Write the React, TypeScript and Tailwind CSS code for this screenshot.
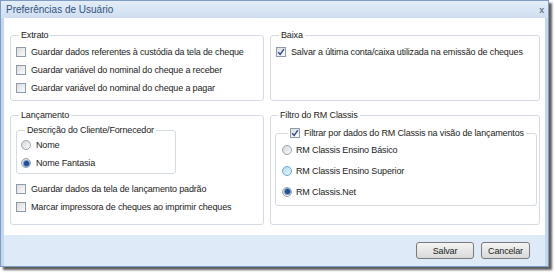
import React from "react";

const font = { fontFamily: '"Liberation Sans", Arial, sans-serif' };

function CheckBox({ checked = false }: { checked?: boolean }) {
  return (
    <span className="flex h-[10px] w-[10px] shrink-0 items-center justify-center border border-[#8f9bab] bg-gradient-to-br from-[#dcdcdc] to-[#fbfbfb]">
      {checked && (
        <svg width="8" height="8" viewBox="0 0 8 8">
          <path d="M1.2 4.2 L3.2 6.4 L6.9 1.2" fill="none" stroke="#2d4c8e" strokeWidth="1.4" />
        </svg>
      )}
    </span>
  );
}

function Radio({ selected = false, hover = false }: { selected?: boolean; hover?: boolean }) {
  return (
    <span
      className={
        "flex h-[10px] w-[10px] shrink-0 items-center justify-center rounded-full border " +
        (hover
          ? "border-[#6aa6d6] bg-gradient-to-br from-[#b5daf3] to-[#e6f4fc]"
          : "border-[#9aa3ae] bg-gradient-to-br from-[#d7d7d7] to-[#fafafa]")
      }
    >
      {selected && <span className="h-[5px] w-[5px] rounded-full bg-[#234f8a] ring-1 ring-[#6f9bd0]" />}
    </span>
  );
}

function CheckRow({ label, checked }: { label: string; checked?: boolean }) {
  return (
    <div className="flex h-[18px] items-center gap-[5px]">
      <CheckBox checked={checked} />
      <span>{label}</span>
    </div>
  );
}

export default function App() {
  return (
    <div className="h-[273px] w-[555px] bg-white text-[9px] leading-[12px] tracking-[-0.15px] text-[#1b1b1b]" style={font}>
      <div className="flex h-[267px] w-[549px] flex-col border border-[#7f9dc4] bg-white shadow-[3px_3px_2px_rgba(40,40,40,0.75)]">
        <div className="flex h-[18px] items-center justify-between bg-gradient-to-b from-[#e4edf8] to-[#cfdef1] pl-[5px] pr-[4px]">
          <span className="text-[10px] tracking-normal text-[#33537f]">Preferências de Usuário</span>
          <span className="text-[9px] font-bold text-[#6b7c90]">x</span>
        </div>
        <div className="flex flex-1 flex-col border-l-[3px] border-r-[3px] border-[#c5d7ee]">
          <div className="grid flex-1 grid-cols-[254px_270px] grid-rows-[72px_116px] gap-x-[6px] gap-y-[8px] bg-white pl-[6px] pt-[11px]">
            <fieldset className="rounded-[3px] border border-[#d4dbe3] pl-[5px]">
              <legend className="ml-[3px] px-[2px]">Extrato</legend>
              <div className="mt-[2px] flex flex-col">
                <CheckRow label="Guardar dados referentes à custódia da tela de cheque" />
                <CheckRow label="Guardar variável do nominal do cheque a receber" />
                <CheckRow label="Guardar variável do nominal do cheque a pagar" />
              </div>
            </fieldset>

            <fieldset className="rounded-[3px] border border-[#d4dbe3] pl-[5px]">
              <legend className="ml-[3px] px-[2px]">Baixa</legend>
              <div className="mt-[2px] flex flex-col">
                <CheckRow checked label="Salvar a última conta/caixa utilizada na emissão de cheques" />
              </div>
            </fieldset>

            <fieldset className="rounded-[3px] border border-[#d4dbe3] pl-[5px]">
              <legend className="ml-[3px] px-[2px]">Lançamento</legend>
              <fieldset className="mt-[3px] w-[160px] rounded-[3px] border border-[#d4dbe3] pb-[1px] pl-[4px]">
                <legend className="ml-[4px] px-[2px]">Descrição do Cliente/Fornecedor</legend>
                <div className="flex h-[18px] items-center gap-[5px]">
                  <Radio />
                  <span>Nome</span>
                </div>
                <div className="flex h-[18px] items-center gap-[5px]">
                  <Radio selected />
                  <span>Nome Fantasia</span>
                </div>
              </fieldset>
              <div className="mt-[6px] flex flex-col">
                <CheckRow label="Guardar dados da tela de lançamento padrão" />
                <CheckRow label="Marcar impressora de cheques ao imprimir cheques" />
              </div>
            </fieldset>

            <fieldset className="rounded-[3px] border border-[#d4dbe3] pl-[4px]">
              <legend className="ml-[3px] px-[2px]">Filtro do RM Classis</legend>
              <fieldset className="mt-[6px] w-[262px] rounded-[3px] border border-[#d4dbe3] pb-[3px] pl-[6px]">
                <legend className="ml-[6px] flex items-center gap-[4px] px-[2px]">
                  <CheckBox checked />
                  <span>Filtrar por dados do RM Classis na visão de lançamentos</span>
                </legend>
                <div className="flex h-[21px] items-center gap-[4px]">
                  <Radio />
                  <span>RM Classis Ensino Básico</span>
                </div>
                <div className="flex h-[21px] items-center gap-[4px]">
                  <Radio hover />
                  <span>RM Classis Ensino Superior</span>
                </div>
                <div className="flex h-[21px] items-center gap-[4px]">
                  <Radio selected />
                  <span>RM Classis.Net</span>
                </div>
              </fieldset>
            </fieldset>
          </div>
          <div className="flex h-[10px] bg-white" />
          <div className="flex h-[31px] items-center justify-end gap-[7px] bg-[#dfeaf8] pr-[15px]">
            <button className="h-[17px] w-[58px] rounded-[3px] border border-[#7a7a7a] bg-gradient-to-b from-[#f4f4f4] to-[#d9d9d9] text-[9px]">
              Salvar
            </button>
            <button className="h-[17px] w-[49px] rounded-[3px] border border-[#7a7a7a] bg-gradient-to-b from-[#f4f4f4] to-[#d9d9d9] text-[9px]">
              Cancelar
            </button>
          </div>
        </div>
      </div>
    </div>
  );
}
